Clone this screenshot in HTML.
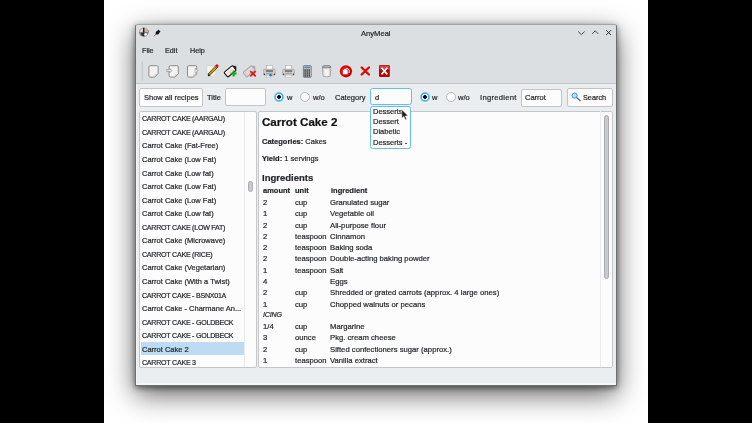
<!DOCTYPE html>
<html><head><meta charset="utf-8">
<style>
*{box-sizing:border-box;margin:0;padding:0}
html,body{width:752px;height:423px;overflow:hidden;background:#000}
body{position:relative;font-family:"Liberation Sans",sans-serif;color:#232627;font-size:7.5px}
.a{position:absolute;white-space:nowrap;will-change:transform;-webkit-text-stroke:0.2px currentColor}
.ns{-webkit-text-stroke:0}
#screen{position:absolute;left:104px;top:0;width:544px;height:423px;background:#fff;overflow:hidden}
#win{position:absolute;left:135px;top:24px;width:482px;height:362px;background:#ebeef1;border:1px solid #6e706e;border-top-color:#a2a4a6;border-radius:3px 3px 0 0;box-shadow:inset 0 -2px 0 #f4f7f9,inset 1px 0 0 #f3f5f7,0 9px 28px rgba(0,0,0,0.6),0 2px 6px rgba(0,0,0,0.5)}
#top{position:absolute;left:136px;top:25px;width:480px;height:58px;background:#dcdfe2;border-radius:2px 2px 0 0}
#sep{position:absolute;left:136px;top:83px;width:480px;height:1px;background:#c3c6c9}
.btn{position:absolute;background:#fcfcfc;border:1px solid #c2c4c6;border-radius:2px}
.inp{position:absolute;background:#fcfcfc;border:1px solid #c2c4c6;border-radius:2px}
.radio{position:absolute;width:9.8px;height:9.8px;border-radius:50%;background:#fcfcfc;border:1px solid #b5b7b9}
.radio.on{border:none;background:radial-gradient(circle at 50% 50%,#111 0,#111 1.7px,#fcfcfc 2.2px,#fcfcfc 3.2px,#3daee9 3.5px,#7ccbf1 4.9px,rgba(124,203,241,0) 5.3px)}

.panel{position:absolute;background:#fcfcfc;border:1px solid #c4c6c8;border-radius:2px}
svg{position:absolute;overflow:visible}
</style></head><body>
<div id="screen"></div>
<div id="win"></div>
<div id="top"></div>
<div id="sep"></div>
<div class="a " style="left:361.00px;top:30.00px;font-size:7.6px;line-height:7.6px;">AnyMeal</div>
<div class="a " style="left:141.60px;top:47.00px;font-size:7.2px;line-height:7.2px;">File</div>
<div class="a " style="left:164.80px;top:47.00px;font-size:7.2px;line-height:7.2px;">Edit</div>
<div class="a " style="left:189.80px;top:47.00px;font-size:7.2px;line-height:7.2px;">Help</div>
<div class="btn" style="left:139.3px;top:88.3px;width:63.5px;height:18.9px"></div>
<div class="a " style="left:143.90px;top:94.00px;font-size:7.5px;line-height:7.5px;">Show all recipes</div>
<div class="a " style="left:207.30px;top:94.00px;font-size:7.5px;line-height:7.5px;">Title</div>
<div class="inp" style="left:225.3px;top:88.3px;width:40.4px;height:18px"></div>
<div class="radio on" style="left:274.3px;top:92.1px"></div>
<div class="a " style="left:286.60px;top:94.00px;font-size:7.5px;line-height:7.5px;">w</div>
<div class="radio" style="left:300px;top:92.1px"></div>
<div class="a " style="left:312.80px;top:94.00px;font-size:7.5px;line-height:7.5px;">w/o</div>
<div class="a " style="left:334.70px;top:94.00px;font-size:7.5px;line-height:7.5px;">Category</div>
<div class="inp" style="left:370.3px;top:88.3px;width:41.6px;height:16.8px;border-color:#62bff0;border-radius:2.5px"></div>
<div class="a " style="left:374.90px;top:94.00px;font-size:7.5px;line-height:7.5px;">d</div>
<div class="radio on" style="left:419.8px;top:92.1px"></div>
<div class="a " style="left:432.30px;top:94.00px;font-size:7.5px;line-height:7.5px;">w</div>
<div class="radio" style="left:446.3px;top:92.1px"></div>
<div class="a " style="left:458.00px;top:94.00px;font-size:7.5px;line-height:7.5px;">w/o</div>
<div class="a " style="left:479.80px;top:94.00px;font-size:7.7px;line-height:7.7px;letter-spacing:0.25px;">Ingredient</div>
<div class="inp" style="left:521.3px;top:88.6px;width:40.4px;height:18px"></div>
<div class="a " style="left:525.00px;top:94.00px;font-size:7.5px;line-height:7.5px;">Carrot</div>
<div class="btn" style="left:566.8px;top:88.4px;width:45.8px;height:18.4px"></div>
<div class="a " style="left:583.20px;top:94.00px;font-size:7.3px;line-height:7.3px;">Search</div>
<div class="panel" style="left:139px;top:111px;width:117.5px;height:257px"></div>
<div class="a" style="left:140.6px;top:342px;width:104px;height:12.8px;background:#bddcf4"></div>
<div class="a " style="left:142.00px;top:116.00px;font-size:7.1px;line-height:7.1px;letter-spacing:-0.25px;">CARROT CAKE (AARGAU)</div>
<div class="a " style="left:142.00px;top:130.00px;font-size:7.1px;line-height:7.1px;letter-spacing:-0.25px;">CARROT CAKE (AARGAU)</div>
<div class="a " style="left:142.00px;top:142.00px;font-size:7.5px;line-height:7.5px;">Carrot Cake (Fat-Free)</div>
<div class="a " style="left:142.00px;top:156.00px;font-size:7.5px;line-height:7.5px;">Carrot Cake (Low Fat)</div>
<div class="a " style="left:142.00px;top:170.00px;font-size:7.5px;line-height:7.5px;">Carrot Cake (Low fat)</div>
<div class="a " style="left:142.00px;top:183.00px;font-size:7.5px;line-height:7.5px;">Carrot Cake (Low Fat)</div>
<div class="a " style="left:142.00px;top:197.00px;font-size:7.5px;line-height:7.5px;">Carrot Cake (Low Fat)</div>
<div class="a " style="left:142.00px;top:210.00px;font-size:7.5px;line-height:7.5px;">Carrot Cake (Low fat)</div>
<div class="a " style="left:142.00px;top:225.00px;font-size:7.1px;line-height:7.1px;letter-spacing:-0.25px;">CARROT CAKE (LOW FAT)</div>
<div class="a " style="left:142.00px;top:237.00px;font-size:7.5px;line-height:7.5px;">Carrot Cake (Microwave)</div>
<div class="a " style="left:142.00px;top:252.00px;font-size:7.1px;line-height:7.1px;letter-spacing:-0.25px;">CARROT CAKE (RICE)</div>
<div class="a " style="left:142.00px;top:264.00px;font-size:7.5px;line-height:7.5px;">Carrot Cake (Vegetarian)</div>
<div class="a " style="left:142.00px;top:278.00px;font-size:7.5px;line-height:7.5px;">Carrot Cake (With a Twist)</div>
<div class="a " style="left:142.00px;top:293.00px;font-size:7.1px;line-height:7.1px;letter-spacing:-0.25px;">CARROT CAKE - BSNX01A</div>
<div class="a " style="left:142.00px;top:305.00px;font-size:7.5px;line-height:7.5px;">Carrot Cake - Charmane An...</div>
<div class="a " style="left:142.00px;top:320.00px;font-size:7.1px;line-height:7.1px;letter-spacing:-0.25px;">CARROT CAKE - GOLDBECK</div>
<div class="a " style="left:142.00px;top:333.00px;font-size:7.1px;line-height:7.1px;letter-spacing:-0.25px;">CARROT CAKE - GOLDBECK</div>
<div class="a " style="left:142.00px;top:346.00px;font-size:7.5px;line-height:7.5px;">Carrot Cake 2</div>
<div class="a " style="left:142.00px;top:360.00px;font-size:7.1px;line-height:7.1px;letter-spacing:-0.25px;">CARROT CAKE 3</div>
<div class="a" style="left:244.3px;top:111.5px;width:1px;height:255px;background:#e9eaeb"></div>
<div class="a" style="left:248px;top:180.6px;width:5px;height:11px;border-radius:2.5px;background:#c9cacb;border:0.6px solid #a9abad"></div>
<div class="panel" style="left:258px;top:111px;width:355px;height:257px"></div>
<div class="a" style="left:600px;top:111px;width:1px;height:256px;background:#e9eaeb"></div>
<div class="a" style="left:604px;top:115px;width:5px;height:164px;border-radius:2.5px;background:#c9cacb;border:0.6px solid #a9abad"></div>
<div class="a " style="left:261.80px;top:116.00px;font-size:11.6px;line-height:11.6px;font-weight:bold;color:#111;">Carrot Cake 2</div>
<div class="a " style="left:262.00px;top:138.00px;font-size:7.5px;line-height:7.5px;"><b>Categories:</b> Cakes</div>
<div class="a " style="left:262.00px;top:155.00px;font-size:7.5px;line-height:7.5px;"><b>Yield:</b> 1 servings</div>
<div class="a " style="left:262.00px;top:173.00px;font-size:9.5px;line-height:9.5px;font-weight:bold;">Ingredients</div>
<div class="a " style="left:262.80px;top:187.00px;font-size:7.5px;line-height:7.5px;font-weight:bold;">amount</div>
<div class="a " style="left:294.70px;top:187.00px;font-size:7.5px;line-height:7.5px;font-weight:bold;">unit</div>
<div class="a " style="left:330.50px;top:187.00px;font-size:7.5px;line-height:7.5px;font-weight:bold;">ingredient</div>
<div class="a " style="left:262.80px;top:199.00px;font-size:7.7px;line-height:7.7px;">2</div>
<div class="a " style="left:295.10px;top:199.00px;font-size:7.7px;line-height:7.7px;">cup</div>
<div class="a " style="left:330.30px;top:199.00px;font-size:7.7px;line-height:7.7px;">Granulated sugar</div>
<div class="a " style="left:262.80px;top:210.00px;font-size:7.7px;line-height:7.7px;">1</div>
<div class="a " style="left:295.10px;top:210.00px;font-size:7.7px;line-height:7.7px;">cup</div>
<div class="a " style="left:330.30px;top:210.00px;font-size:7.7px;line-height:7.7px;">Vegetable oil</div>
<div class="a " style="left:262.80px;top:222.00px;font-size:7.7px;line-height:7.7px;">2</div>
<div class="a " style="left:295.10px;top:222.00px;font-size:7.7px;line-height:7.7px;">cup</div>
<div class="a " style="left:330.30px;top:222.00px;font-size:7.7px;line-height:7.7px;">All-purpose flour</div>
<div class="a " style="left:262.80px;top:233.00px;font-size:7.7px;line-height:7.7px;">2</div>
<div class="a " style="left:295.10px;top:233.00px;font-size:7.7px;line-height:7.7px;">teaspoon</div>
<div class="a " style="left:330.30px;top:233.00px;font-size:7.7px;line-height:7.7px;">Cinnamon</div>
<div class="a " style="left:262.80px;top:244.00px;font-size:7.7px;line-height:7.7px;">2</div>
<div class="a " style="left:295.10px;top:244.00px;font-size:7.7px;line-height:7.7px;">teaspoon</div>
<div class="a " style="left:330.30px;top:244.00px;font-size:7.7px;line-height:7.7px;">Baking soda</div>
<div class="a " style="left:262.80px;top:255.00px;font-size:7.7px;line-height:7.7px;">2</div>
<div class="a " style="left:295.10px;top:255.00px;font-size:7.7px;line-height:7.7px;">teaspoon</div>
<div class="a " style="left:330.30px;top:255.00px;font-size:7.7px;line-height:7.7px;">Double-acting baking powder</div>
<div class="a " style="left:262.80px;top:267.00px;font-size:7.7px;line-height:7.7px;">1</div>
<div class="a " style="left:295.10px;top:267.00px;font-size:7.7px;line-height:7.7px;">teaspoon</div>
<div class="a " style="left:330.30px;top:267.00px;font-size:7.7px;line-height:7.7px;">Salt</div>
<div class="a " style="left:262.80px;top:278.00px;font-size:7.7px;line-height:7.7px;">4</div>
<div class="a " style="left:330.30px;top:278.00px;font-size:7.7px;line-height:7.7px;">Eggs</div>
<div class="a " style="left:262.80px;top:289.00px;font-size:7.7px;line-height:7.7px;">2</div>
<div class="a " style="left:295.10px;top:289.00px;font-size:7.7px;line-height:7.7px;">cup</div>
<div class="a " style="left:330.30px;top:289.00px;font-size:7.7px;line-height:7.7px;">Shredded or grated carrots (approx. 4 large ones)</div>
<div class="a " style="left:262.80px;top:301.00px;font-size:7.7px;line-height:7.7px;">1</div>
<div class="a " style="left:295.10px;top:301.00px;font-size:7.7px;line-height:7.7px;">cup</div>
<div class="a " style="left:330.30px;top:301.00px;font-size:7.7px;line-height:7.7px;">Chopped walnuts or pecans</div>
<div class="a " style="left:262.60px;top:312.00px;font-size:7.1px;line-height:7.1px;font-style:italic;letter-spacing:-0.2px;">ICING</div>
<div class="a " style="left:262.80px;top:323.00px;font-size:7.7px;line-height:7.7px;">1/4</div>
<div class="a " style="left:295.10px;top:323.00px;font-size:7.7px;line-height:7.7px;">cup</div>
<div class="a " style="left:330.30px;top:323.00px;font-size:7.7px;line-height:7.7px;">Margarine</div>
<div class="a " style="left:262.80px;top:334.00px;font-size:7.7px;line-height:7.7px;">3</div>
<div class="a " style="left:295.10px;top:334.00px;font-size:7.7px;line-height:7.7px;">ounce</div>
<div class="a " style="left:330.30px;top:334.00px;font-size:7.7px;line-height:7.7px;">Pkg. cream cheese</div>
<div class="a " style="left:262.80px;top:346.00px;font-size:7.7px;line-height:7.7px;">2</div>
<div class="a " style="left:295.10px;top:346.00px;font-size:7.7px;line-height:7.7px;">cup</div>
<div class="a " style="left:330.30px;top:346.00px;font-size:7.7px;line-height:7.7px;">Sifted confectioners sugar (approx.)</div>
<div class="a " style="left:262.80px;top:357.00px;font-size:7.7px;line-height:7.7px;">1</div>
<div class="a " style="left:295.10px;top:357.00px;font-size:7.7px;line-height:7.7px;">teaspoon</div>
<div class="a " style="left:330.30px;top:357.00px;font-size:7.7px;line-height:7.7px;">Vanilla extract</div>
<div class="a" style="left:370.3px;top:105.9px;width:41.3px;height:42.5px;background:#fcfcfc;border:1px solid #62bff0;border-radius:2.5px"></div>
<div class="a " style="left:372.90px;top:108.00px;font-size:7.5px;line-height:7.5px;">Desserts</div>
<div class="a " style="left:372.90px;top:118.00px;font-size:7.5px;line-height:7.5px;">Dessert</div>
<div class="a " style="left:372.90px;top:128.00px;font-size:7.5px;line-height:7.5px;">Diabetic</div>
<div class="a " style="left:372.90px;top:139.00px;font-size:7.5px;line-height:7.5px;">Desserts -</div>
<svg width="752" height="423" style="left:0;top:0" viewBox="0 0 752 423"><rect x="141.6" y="61.6" width="1.2" height="19" fill="#c2c4c6"/><path d="M150.20000000000002,65.7 H156.79999999999998 Q158.1,65.7 158.1,67.0 V73.80000000000001 L154.79999999999998,77.10000000000001 H150.20000000000002 Q148.9,77.10000000000001 148.9,75.80000000000001 V67.0 Q148.9,65.7 150.20000000000002,65.7 Z" fill="#f3f3f3" stroke="#8a8a8a" stroke-width="1" stroke-linejoin="round"/><path d="M155.1,76.60000000000001 V74.60000000000001 H157.4" fill="none" stroke="#b0b0b0" stroke-width="0.6"/><path d="M170.4,65.7 H176.99999999999997 Q178.29999999999998,65.7 178.29999999999998,67.0 V73.80000000000001 L174.99999999999997,77.10000000000001 H170.4 Q169.1,77.10000000000001 169.1,75.80000000000001 V67.0 Q169.1,65.7 170.4,65.7 Z" fill="#f3f3f3" stroke="#8a8a8a" stroke-width="1" stroke-linejoin="round"/><path d="M175.29999999999998,76.60000000000001 V74.60000000000001 H177.6" fill="none" stroke="#b0b0b0" stroke-width="0.6"/><path d="M166.8,69.6 H170.2 V68.8 L171.8,70.6 L170.2,72.4 V71.6 H166.8 Z" fill="#f4f4f4" stroke="#8a8a8a" stroke-width="0.7"/><path d="M188.8,65.7 H195.39999999999998 Q196.7,65.7 196.7,67.0 V73.80000000000001 L193.39999999999998,77.10000000000001 H188.8 Q187.5,77.10000000000001 187.5,75.80000000000001 V67.0 Q187.5,65.7 188.8,65.7 Z" fill="#f3f3f3" stroke="#8a8a8a" stroke-width="1" stroke-linejoin="round"/><path d="M193.7,76.60000000000001 V74.60000000000001 H196.0" fill="none" stroke="#b0b0b0" stroke-width="0.6"/><path d="M195.2,68.2 L197.8,70.8 L195.2,73.4 Z" fill="#f4f4f4" stroke="#9a9a9a" stroke-width="0.7"/><path d="M206.9,65.6 H215.8 V73.5 L212.8,76.5 H206.9 Z" fill="#f8f8f8" stroke="#c8c8c8" stroke-width="0.7"/><path d="M209.2,74.6 L216.8,66.2" stroke="#2a2200" stroke-width="3" stroke-linecap="round"/><path d="M209.2,74.6 L216.8,66.2" stroke="#f2c418" stroke-width="2"/><path d="M209.6,74.1 L216.3,66.7" stroke="#111" stroke-width="0.7" stroke-dasharray="1 0.6"/><path d="M208.2,75.8 L209.4,74.4" stroke="#222" stroke-width="1.2"/><circle cx="217" cy="66" r="1.5" fill="#e01010"/><g transform="translate(230.5,71) rotate(-40)"><rect x="-6" y="-3" width="11" height="6" rx="1" fill="#fbfbfb" stroke="#111" stroke-width="1.1"/><rect x="-4.3" y="-0.8" width="7" height="1.5" fill="#f4c89a"/><path d="M5,-3 L7.5,0 L5,3 Z" fill="#111"/></g><circle cx="236.2" cy="65.6" r="0.9" fill="none" stroke="#bbb" stroke-width="0.5"/><path d="M233.6,70.6 V76.6 M230.6,73.6 H236.6" stroke="#1aa31a" stroke-width="2"/><g transform="translate(249.5,71) rotate(-40)"><rect x="-6" y="-3" width="11" height="6" rx="1" fill="#d9d9d9" stroke="#a8a8a8" stroke-width="1.1"/><path d="M5,-3 L7.5,0 L5,3 Z" fill="#a8a8a8"/></g><path d="M250.3,71.1 L255.7,76.3 M255.7,71.1 L250.3,76.3" stroke="#e01818" stroke-width="1.8"/><rect x="266.40000000000003" y="65.3" width="6.2" height="4.5" fill="#fdfdfd" stroke="#9a9a9a" stroke-width="0.5"/><rect x="263.6" y="69.2" width="11.6" height="6" rx="0.8" fill="#d0d0d0" stroke="#8a8a8a" stroke-width="0.5"/><rect x="265.8" y="70.4" width="7.2" height="1.2" fill="#4a4a4a"/><rect x="266.20000000000005" y="72.8" width="6.4" height="0.8" fill="#888"/><circle cx="264.5" cy="74.2" r="0.6" fill="#111"/><circle cx="274.3" cy="74.2" r="0.6" fill="#111"/><rect x="266.20000000000005" y="75.1" width="6.4" height="2" fill="#fdfdfd" stroke="#9a9a9a" stroke-width="0.4"/><circle cx="270.6" cy="75.2" r="1.3" fill="#2a6fc0"/><rect x="285.5" y="65.3" width="6.2" height="4.5" fill="#fdfdfd" stroke="#9a9a9a" stroke-width="0.5"/><rect x="282.7" y="69.2" width="11.6" height="6" rx="0.8" fill="#d0d0d0" stroke="#8a8a8a" stroke-width="0.5"/><rect x="284.9" y="70.4" width="7.2" height="1.2" fill="#4a4a4a"/><rect x="285.3" y="72.8" width="6.4" height="0.8" fill="#888"/><circle cx="283.59999999999997" cy="74.2" r="0.6" fill="#111"/><circle cx="293.4" cy="74.2" r="0.6" fill="#111"/><rect x="285.3" y="75.1" width="6.4" height="2" fill="#fdfdfd" stroke="#9a9a9a" stroke-width="0.4"/><rect x="303.4" y="65.7" width="7.8" height="11.6" rx="0.6" fill="#d4d4d4" stroke="#555" stroke-width="0.7"/><rect x="304.3" y="66.5" width="6" height="1.9" fill="#5c84cc"/><rect x="304.30" y="69.30" width="1.5" height="1.5" fill="#2e2e2e"/><rect x="306.40" y="69.30" width="1.5" height="1.5" fill="#2e2e2e"/><rect x="308.50" y="69.30" width="1.5" height="1.5" fill="#2e2e2e"/><rect x="304.30" y="71.25" width="1.5" height="1.5" fill="#2e2e2e"/><rect x="306.40" y="71.25" width="1.5" height="1.5" fill="#2e2e2e"/><rect x="308.50" y="71.25" width="1.5" height="1.5" fill="#2e2e2e"/><rect x="304.30" y="73.20" width="1.5" height="1.5" fill="#2e2e2e"/><rect x="306.40" y="73.20" width="1.5" height="1.5" fill="#2e2e2e"/><rect x="308.50" y="73.20" width="1.5" height="1.5" fill="#2e2e2e"/><rect x="304.30" y="75.15" width="1.5" height="1.5" fill="#2e2e2e"/><rect x="306.40" y="75.15" width="1.5" height="1.5" fill="#2e2e2e"/><rect x="308.50" y="75.15" width="1.5" height="1.5" fill="#2e2e2e"/><path d="M322.4,67 L323.1,76.3 Q326.6,77.4 330.2,76.3 L330.9,67 Z" fill="#f4f4f4" stroke="#8a8a8a" stroke-width="0.7"/><path d="M323.6,68 L324,75.6 M329.6,68 L329.2,75.6" stroke="#c8c8c8" stroke-width="0.8"/><ellipse cx="326.65" cy="66.8" rx="4.3" ry="1.2" fill="#bcbcbc" stroke="#606060" stroke-width="0.7"/><circle cx="345.95" cy="71.3" r="6.1" fill="#e00000"/><circle cx="346.3" cy="71.8" r="4.9" fill="#b00000"/><circle cx="345.6" cy="71" r="4.5" fill="#ee0a0a"/><path d="M342.8,70.2 L345.2,68.6 L347.6,70 L347.6,74.2 L342.8,74.2 Z" fill="#fff"/><path d="M346.2,68.4 Q348.6,68.2 349.4,70.6 L349,73" fill="none" stroke="#fff" stroke-width="1"/><path d="M361.7,67.5 L368.9,74.5 M368.9,67.5 L361.7,74.5" stroke="#e00a0a" stroke-width="2.4" stroke-linecap="round"/><rect x="379" y="65" width="10.8" height="11.9" rx="1.2" fill="#b80000"/><rect x="379.6" y="65.5" width="9.6" height="4" rx="1" fill="#e06060" opacity="0.7"/><path d="M381.5,67.8 L387.3,74.4 M387.3,67.8 L381.5,74.4" stroke="#fff" stroke-width="1.7"/><path d="M578.2,31.5 L581.4,34.6 L584.6,31.5" fill="none" stroke="#333" stroke-width="0.9"/><path d="M592.2,33.9 L595.2,30.8 L598.2,33.9" fill="none" stroke="#333" stroke-width="0.9"/><path d="M606.2,30.2 L611,35 M611,30.2 L606.2,35" fill="none" stroke="#222" stroke-width="0.9"/><ellipse cx="143.8" cy="32.3" rx="4.7" ry="4.6" fill="#85807c"/><path d="M139.1,32 Q139.6,27.6 143.8,27.6 Q148,27.6 148.5,32 Z" fill="#c4b4ac"/><path d="M140.2,31.8 Q140.8,29 143,28.4 V31.8 Z" fill="#ece6e2"/><rect x="142.9" y="27.8" width="1.5" height="5" fill="#222"/><path d="M141,33.2 Q142.5,32.4 144.5,33.2 L144,36 Q142,36.2 141.4,35 Z" fill="#2e2a28"/><circle cx="145.6" cy="34.4" r="1.3" fill="#fafafa"/><path d="M147.6,30.2 L148.9,30.8 L148.4,32.2" fill="none" stroke="#777" stroke-width="0.6"/><path d="M158.4,29.6 L160.6,31.8 L159.6,32.6 L158.2,34.4 L156.4,34.6 L155.6,33.8 L155.8,32 L157.6,30.6 Z" fill="#111"/><path d="M156.2,34 L154.2,36" stroke="#444" stroke-width="0.8" stroke-linecap="round"/><path d="M576.6,97.6 L580.2,100.6" stroke="#4a4a4a" stroke-width="1.2" stroke-linecap="round"/><circle cx="574.6" cy="95.6" r="2.6" fill="#aee0f8" stroke="#2b8bd6" stroke-width="0.9"/><path d="M401.8,109.4 L401.8,118.2 L403.8,116.4 L405.4,119.8 L406.8,119.2 L405.3,116 L408,115.8 Z" fill="#222" stroke="#fff" stroke-width="0.5"/></svg>
</body></html>
